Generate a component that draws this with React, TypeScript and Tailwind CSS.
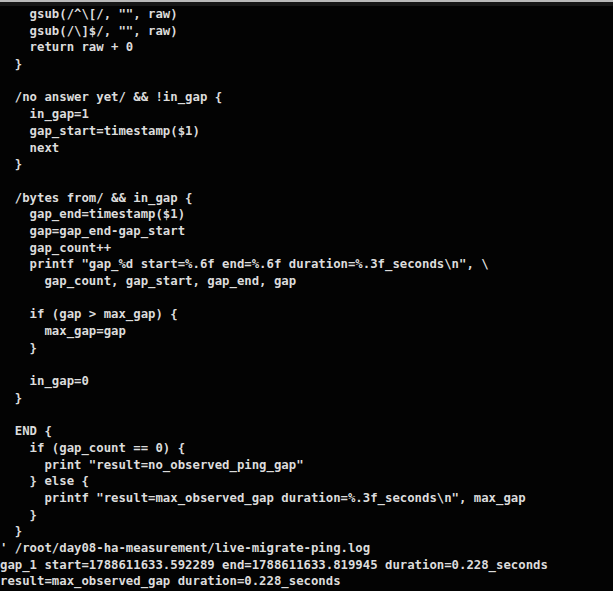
const lines = [
  "    gsub(/^\\[/, \"\", raw)",
  "    gsub(/\\]$/, \"\", raw)",
  "    return raw + 0",
  "  }",
  "",
  "  /no answer yet/ && !in_gap {",
  "    in_gap=1",
  "    gap_start=timestamp($1)",
  "    next",
  "  }",
  "",
  "  /bytes from/ && in_gap {",
  "    gap_end=timestamp($1)",
  "    gap=gap_end-gap_start",
  "    gap_count++",
  "    printf \"gap_%d start=%.6f end=%.6f duration=%.3f_seconds\\n\", \\",
  "      gap_count, gap_start, gap_end, gap",
  "",
  "    if (gap > max_gap) {",
  "      max_gap=gap",
  "    }",
  "",
  "    in_gap=0",
  "  }",
  "",
  "  END {",
  "    if (gap_count == 0) {",
  "      print \"result=no_observed_ping_gap\"",
  "    } else {",
  "      printf \"result=max_observed_gap duration=%.3f_seconds\\n\", max_gap",
  "    }",
  "  }",
  "' /root/day08-ha-measurement/live-migrate-ping.log",
  "gap_1 start=1788611633.592289 end=1788611633.819945 duration=0.228_seconds",
  "result=max_observed_gap duration=0.228_seconds",
];

export default function App() {
  return (
    <div className="w-[613px] h-[591px] overflow-hidden bg-[#030303] flex flex-col">
      {/* window edge */}
      <div className="h-[2px] bg-[#b9b9b9] shrink-0" />
      <div className="h-[4px] bg-[#161616] shrink-0" />

      {/* terminal output */}
      <pre className="font-['DejaVu_Sans_Mono',monospace] font-bold text-[12.3px] leading-[16.7px] text-[#dcdcdc] whitespace-pre m-0 pl-0">
        {lines.map((line, i) => (
          <div key={i} className="h-[16.7px]">
            {line}
          </div>
        ))}
      </pre>
    </div>
  );
}
